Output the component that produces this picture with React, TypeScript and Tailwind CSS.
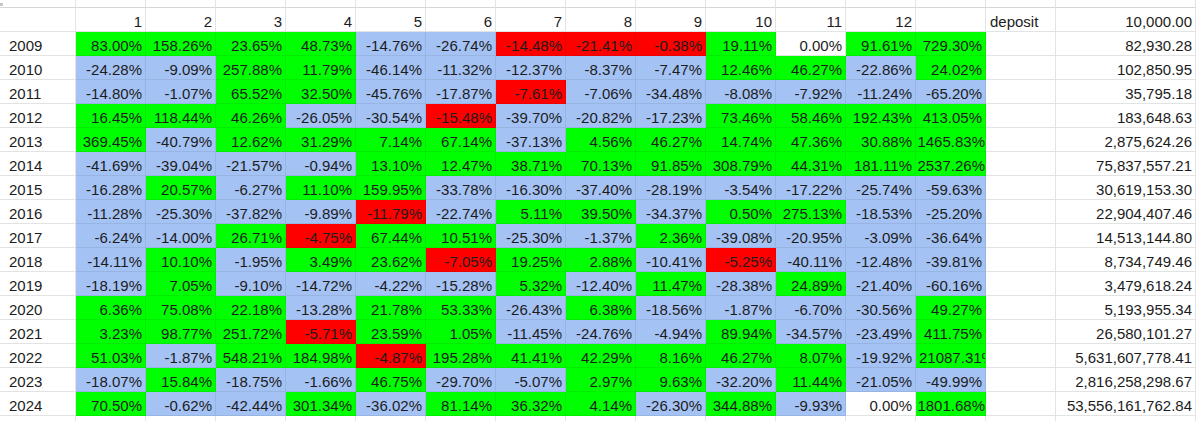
import React from "react";

type Row = { year: string; cells: string[]; value: string };

const rows: Row[] = [
  { year: "2009", cells: ["83.00", "158.26", "23.65", "48.73", "-14.76", "-26.74", "!-14.48", "!-21.41", "!-0.38", "19.11", "0.00", "91.61", "729.30"], value: "82,930.28" },
  { year: "2010", cells: ["-24.28", "-9.09", "257.88", "11.79", "-46.14", "-11.32", "-12.37", "-8.37", "-7.47", "12.46", "46.27", "-22.86", "24.02"], value: "102,850.95" },
  { year: "2011", cells: ["-14.80", "-1.07", "65.52", "32.50", "-45.76", "-17.87", "!-7.61", "-7.06", "-34.48", "-8.08", "-7.92", "-11.24", "-65.20"], value: "35,795.18" },
  { year: "2012", cells: ["16.45", "118.44", "46.26", "-26.05", "-30.54", "!-15.48", "-39.70", "-20.82", "-17.23", "73.46", "58.46", "192.43", "413.05"], value: "183,648.63" },
  { year: "2013", cells: ["369.45", "-40.79", "12.62", "31.29", "7.14", "67.14", "-37.13", "4.56", "46.27", "14.74", "47.36", "30.88", "1465.83"], value: "2,875,624.26" },
  { year: "2014", cells: ["-41.69", "-39.04", "-21.57", "-0.94", "13.10", "12.47", "38.71", "70.13", "91.85", "308.79", "44.31", "181.11", "2537.26"], value: "75,837,557.21" },
  { year: "2015", cells: ["-16.28", "20.57", "-6.27", "11.10", "159.95", "-33.78", "-16.30", "-37.40", "-28.19", "-3.54", "-17.22", "-25.74", "-59.63"], value: "30,619,153.30" },
  { year: "2016", cells: ["-11.28", "-25.30", "-37.82", "-9.89", "!-11.79", "-22.74", "5.11", "39.50", "-34.37", "0.50", "275.13", "-18.53", "-25.20"], value: "22,904,407.46" },
  { year: "2017", cells: ["-6.24", "-14.00", "26.71", "!-4.75", "67.44", "10.51", "-25.30", "-1.37", "2.36", "-39.08", "-20.95", "-3.09", "-36.64"], value: "14,513,144.80" },
  { year: "2018", cells: ["-14.11", "10.10", "-1.95", "3.49", "23.62", "!-7.05", "19.25", "2.88", "-10.41", "!-5.25", "-40.11", "-12.48", "-39.81"], value: "8,734,749.46" },
  { year: "2019", cells: ["-18.19", "7.05", "-9.10", "-14.72", "-4.22", "-15.28", "5.32", "-12.40", "11.47", "-28.38", "24.89", "-21.40", "-60.16"], value: "3,479,618.24" },
  { year: "2020", cells: ["6.36", "75.08", "22.18", "-13.28", "21.78", "53.33", "-26.43", "6.38", "-18.56", "-1.87", "-6.70", "-30.56", "49.27"], value: "5,193,955.34" },
  { year: "2021", cells: ["3.23", "98.77", "251.72", "!-5.71", "23.59", "1.05", "-11.45", "-24.76", "-4.94", "89.94", "-34.57", "-23.49", "411.75"], value: "26,580,101.27" },
  { year: "2022", cells: ["51.03", "-1.87", "548.21", "184.98", "!-4.87", "195.28", "41.41", "42.29", "8.16", "46.27", "8.07", "-19.92", "21087.31"], value: "5,631,607,778.41" },
  { year: "2023", cells: ["-18.07", "15.84", "-18.75", "-1.66", "46.75", "-29.70", "-5.07", "2.97", "9.63", "-32.20", "11.44", "-21.05", "-49.99"], value: "2,816,258,298.67" },
  { year: "2024", cells: ["70.50", "-0.62", "-42.44", "301.34", "-36.02", "81.14", "36.32", "4.14", "-26.30", "344.88", "-9.93", "0.00", "1801.68"], value: "53,556,161,762.84" },
];

const base =
  "flex items-end h-[24px] border-r border-b pb-[1px] leading-[17px] whitespace-nowrap overflow-hidden";

const fills = {
  G: "bg-[#00ff00] border-black/[0.07]",
  B: "bg-[#a4c2f4] border-black/[0.07]",
  R: "bg-[#ff0000] border-black/[0.07]",
  W: "bg-white border-[#e2e3e3]",
};

function Pct({ raw }: { raw: string }) {
  const red = raw.startsWith("!");
  const v = red ? raw.slice(1) : raw;
  const n = parseFloat(v);
  const kind = red ? "R" : n > 0 ? "G" : n < 0 ? "B" : "W";
  const len = v.replace("-", "").length;
  const align =
    len > 7
      ? "justify-start pl-[3px]"
      : len === 7
      ? "justify-end pr-0"
      : "justify-end pr-[3px]";
  return <div className={`${base} ${fills[kind]} ${align}`}>{v}%</div>;
}

export default function App() {
  const white = `${base} ${fills.W}`;
  return (
    <div
      className="w-[1200px] h-[421px] bg-white text-[15px] text-[#1c1c1c] overflow-hidden"
      style={{ fontFamily: '"Liberation Sans", Arial, sans-serif' }}
    >
      <div className="grid grid-cols-[76px_repeat(14,70px)_140px]">
        {/* top strip (cropped previous row) */}
        {Array.from({ length: 16 }).map((_, i) => (
          <div
            key={`t${i}`}
            className="h-[8px] border-r border-b border-r-[#e2e3e3] border-b-[#d6d6d6] bg-white"
          >
            {i === 0 && <div className="mt-[3px] w-[3px] h-[3px] bg-[#c4c4c4]" />}
          </div>
        ))}

        {/* header row */}
        <div className={white} />
        {Array.from({ length: 12 }).map((_, i) => (
          <div key={`h${i}`} className={`${white} justify-end pr-[3px]`}>
            {i + 1}
          </div>
        ))}
        <div className={white} />
        <div className={`${white} justify-start pl-[4px]`}>deposit</div>
        <div className={`${white} justify-end pr-[3px]`}>10,000.00</div>

        {rows.map((r) => (
          <React.Fragment key={r.year}>
            <div className={`${white} justify-start pl-[9px]`}>{r.year}</div>
            {r.cells.map((c, i) => (
              <Pct key={i} raw={c} />
            ))}
            <div className={white} />
            <div className={`${white} justify-end pr-[3px]`}>{r.value}</div>
          </React.Fragment>
        ))}

        {/* bottom strip */}
        {Array.from({ length: 16 }).map((_, i) => (
          <div key={`b${i}`} className="h-[5px] border-r border-[#e2e3e3] bg-white" />
        ))}
      </div>
    </div>
  );
}
